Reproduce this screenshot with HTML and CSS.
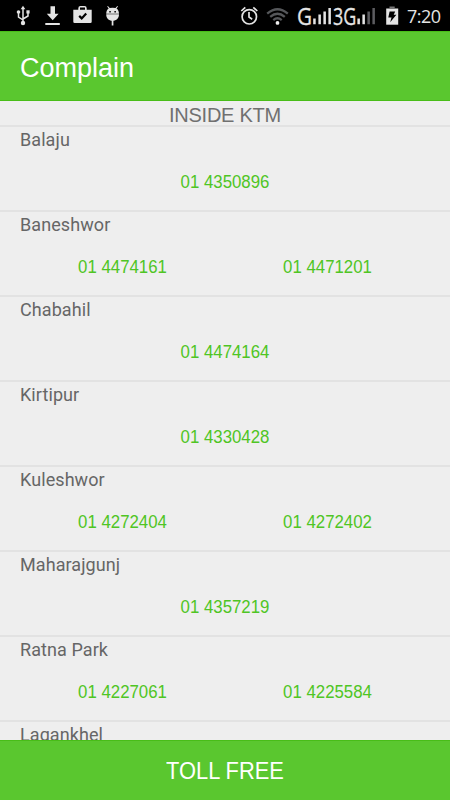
FILE: index.html
```html
<!DOCTYPE html>
<html lang="en">
<head>
<meta charset="utf-8">
<meta name="viewport" content="width=device-width">
<title>Complain</title>
<link rel="stylesheet" href="styles.css">
</head>
<body>
<div class="screen">
  <div class="status">
    <svg class="status-icons" viewBox="0 0 450 31" width="450" height="31" aria-hidden="true">
      <g fill="none" stroke="#e4e4e4" stroke-width="1.500">
        <path d="M23 9v14M23 20l-4.500-3v-5M23 19l5-3v-4"/>
      </g>
      <g fill="#e4e4e4">
        <path d="M23 5.700l2.300 3.600h-4.600z"/>
        <circle cx="23" cy="23" r="2.200"/>
        <circle cx="18.500" cy="12" r="1.800"/>
        <path d="M26.400 10.300h3.200v3.200h-3.200z"/>
        <path d="M50.500 6.300h4.500v7.500h3.600l-5.900 6.400-5.900-6.400h3.700zM45.300 23h14.500v2H45.300z"/>
        <path fill-rule="evenodd" d="M73.300 9.700h5V8.200q0-2.200 2.200-2.200h4q2.200 0 2.200 2.200v1.500h5v12q0 1.300-1.300 1.300H74.600q-1.300 0-1.300-1.300zM80 9.700h5V7.500h-5z"/>
        <path d="M106.200 14.200h12.800c0 4-2.400 6.500-6.400 6.500s-6.400-2.500-6.400-6.500zM111.700 20h1.700v5.500h-1.700z"/>
        <path fill-rule="evenodd" d="M106.200 13.700c.1-2.600 1-4.200 2.500-5.200l-1.500-2 .7-.5 1.800 2.100q2.900-.7 5.800 0l1.800-2.100.7.500-1.500 2c1.500 1 2.400 2.600 2.500 5.200zM109.300 11v1.500h1.500V11zM114.400 11v1.500h1.500V11z"/>
      </g>
      <path d="M79.200 15.900l2.500 2.500 4.500-5" fill="none" stroke="#000" stroke-width="2.200"/>
      <g fill="none" stroke="#e4e4e4" stroke-width="1.700">
        <circle cx="249.300" cy="16.800" r="7.200"/>
        <path d="M249 12v5l3.200 2.200M241.300 11l4-3.700M257.300 11l-4-3.700"/>
      </g>
      <g fill="none" stroke="#55575a" stroke-width="2.300">
        <path d="M267.200 13.700q10.300-9 20.600 0M270.200 16.900q7.300-6.200 14.600 0M273.300 20.100q4.200-3.600 8.400 0"/>
      </g>
      <circle cx="277.500" cy="22.900" r="1.900" fill="#eee"/>
      <g fill="#e4e4e4">
        <path d="M313.200 18.500h2.500v5.700h-2.500zM318.400 14.500h2.500v9.700h-2.500zM323.400 11.500h2.500v12.700h-2.500zM328.400 8h2.500v16.200h-2.500zM357.400 18.500h2.500v5.700h-2.500zM362.400 14.500h2.500v9.700h-2.500z"/>
        <path fill="#5c5c60" d="M367.400 11.500h2.500v12.700h-2.500zM372.400 8h2.500v16.200h-2.500z"/>
        <path d="M386.200 8.500h12v16.200h-12z"/>
        <path fill="#777" d="M389.500 6.500h5.200v2h-5.200z"/>
      </g>
      <path d="M389.600 11.500h5.600l-1.500 3.300h2.700l-6.200 7.500 1.300-4.700h-3.200z" fill="#000"/>
    </svg>
    <span class="net net-first">G</span>
    <span class="net net-second">3G</span>
    <span class="clock">7:20</span>
  </div>
  <header class="appbar">Complain</header>
  <main class="list">
    <h2 class="section">INSIDE KTM</h2>
    <section class="row"><h3>Balaju</h3><div class="phones"><a>01 4350896</a></div></section>
    <section class="row"><h3>Baneshwor</h3><div class="phones"><a>01 4474161</a><a>01 4471201</a></div></section>
    <section class="row"><h3>Chabahil</h3><div class="phones"><a>01 4474164</a></div></section>
    <section class="row"><h3>Kirtipur</h3><div class="phones"><a>01 4330428</a></div></section>
    <section class="row"><h3>Kuleshwor</h3><div class="phones"><a>01 4272404</a><a>01 4272402</a></div></section>
    <section class="row"><h3>Maharajgunj</h3><div class="phones"><a>01 4357219</a></div></section>
    <section class="row"><h3>Ratna Park</h3><div class="phones"><a>01 4227061</a><a>01 4225584</a></div></section>
    <section class="row"><h3>Lagankhel</h3><div class="phones"></div></section>
  </main>
  <footer class="toll"><span>TOLL FREE</span></footer>
</div>
</body>
</html>
```
FILE: styles.css
```css
* { box-sizing: border-box; }
body { margin: 0; background: #eee; }
.screen {
  display: flex;
  flex-direction: column;
  width: 450px;
  height: 800px;
  overflow: hidden;
  font-family: "Liberation Sans", Arial, sans-serif;
}
.status {
  position: relative;
  flex: 0 0 31px;
  background: #000;
  color: #e4e4e4;
}
.status-icons { display: block; }
.net, .clock { position: absolute; line-height: 24px; white-space: nowrap; font-family: "Open Sans", sans-serif; }
.net { top: 4px; font-size: 23px; -webkit-text-stroke: 0.3px #e4e4e4; transform-origin: left; }
.net-first { left: 297px; transform: scaleX(0.9); }
.net-second { left: 333px; transform: scaleX(0.78); }
.clock { top: 4px; left: 407px; font-size: 18px; letter-spacing: -0.5px; }
.appbar {
  flex: 0 0 70px;
  padding: 4px 0 0 20px;
  border-top: 1px solid #48bd18;
  border-bottom: 1px solid #48bd18;
  background: #5ac72f;
  color: #fff;
  font-size: 27px;
  line-height: 64px;
}
.list { flex: 1 1 0; min-height: 0; overflow: hidden; background: #eee; }
.section {
  height: 26px;
  margin: 0;
  border-bottom: 2px solid #e2e2e2;
  color: #707070;
  font-size: 20px;
  font-weight: 400;
  line-height: 28px;
  letter-spacing: -0.25px;
  text-align: center;
}
.row { height: 85px; border-bottom: 2px solid #e2e2e2; }
.row h3 {
  height: 25px;
  margin: 0;
  padding-left: 20px;
  color: #666;
  font: 400 18px/25px Roboto, sans-serif;
  letter-spacing: 0.08px;
}
.phones { display: flex; height: 58px; padding: 0 20px; }
.phones a {
  flex: 1;
  color: #4fc524;
  font-size: 18px;
  line-height: 60px;
  text-align: center;
  transform: scaleX(0.935);
}
.toll {
  display: flex;
  justify-content: center;
  flex: 0 0 60px;
  padding-top: 2px;
  border-top: 1px solid #48bd18;
  background: #5ac72f;
  color: #fff;
  font-size: 23px;
  line-height: 57px;
}
.toll span { transform: scaleX(0.95); }
```
